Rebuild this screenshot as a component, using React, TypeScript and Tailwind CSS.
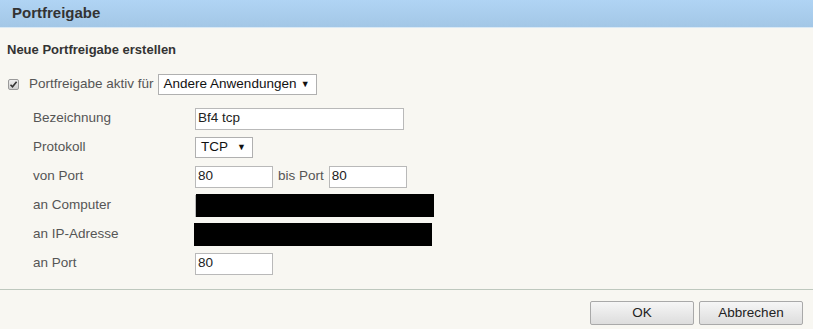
import { ReactNode } from "react";

const font = { fontFamily: '"Liberation Sans", Arial, sans-serif' };

function Field({ w, value, children }: { w: string; value?: string; children?: ReactNode }) {
  return (
    <div className={`relative h-[22px] ${w} bg-white border border-[#b9b9b9] flex items-center px-[2px] text-[13.5px] text-[#222]`}>
      {value}
      {children}
    </div>
  );
}

function Select({ w, value }: { w: string; value: string }) {
  return (
    <div className={`h-[21px] ${w} bg-white border border-[#b0b0b0] flex items-center justify-between pl-[5px] pr-[6px] text-[13.5px] text-[#111]`}>
      <span>{value}</span>
      <span className="text-[9px] leading-none">▼</span>
    </div>
  );
}

function Row({ label, children }: { label: string; children: ReactNode }) {
  return (
    <div className="h-[29px] flex items-center">
      <div className="w-[195px] shrink-0 pl-[33px] text-[13.5px] text-[#555]">{label}</div>
      <div className="flex items-center">{children}</div>
    </div>
  );
}

function Redacted({ className }: { className: string }) {
  return <div className={`absolute bg-black ${className}`} />;
}

export default function App() {
  return (
    <div style={font} className="w-[813px] h-[329px] bg-[#f8f7f2] flex flex-col overflow-hidden">
      {/* header */}
      <div className="h-[28px] shrink-0 bg-gradient-to-b from-[#b0d4f4] to-[#a3c7e6] border-b border-[#d9e9f5] flex items-center pl-[12px]">
        <span className="text-[15px] font-bold text-[#333]">Portfreigabe</span>
      </div>

      <div className="flex-1 flex flex-col">
        <div className="pt-[14px] pl-[7px] text-[13px] font-bold text-[#333] leading-[16px]">Neue Portfreigabe erstellen</div>

        <div className="mt-[16px] h-[21px] flex items-center">
          <span className="ml-[8px] w-[11px] h-[11px] rounded-[2px] border border-[#9a9a9a] bg-gradient-to-b from-[#eee] to-[#cfcfcf] flex items-center justify-center">
            <svg width="9" height="9" viewBox="0 0 9 9">
              <path d="M1.5 4.8 L3.5 6.8 L7.6 1.8" fill="none" stroke="#333" strokeWidth="1.6" />
            </svg>
          </span>
          <span className="ml-[10px] text-[13.5px] text-[#555]">Portfreigabe aktiv für</span>
          <div className="ml-[4px]">
            <Select w="w-[159px]" value="Andere Anwendungen" />
          </div>
        </div>

        <div className="mt-[9px] flex flex-col">
          <Row label="Bezeichnung">
            <Field w="w-[209px]" value="Bf4 tcp" />
          </Row>
          <Row label="Protokoll">
            <Select w="w-[58px]" value="TCP" />
          </Row>
          <Row label="von Port">
            <Field w="w-[78px]" value="80" />
            <span className="mx-[5px] text-[13.5px] text-[#555]">bis Port</span>
            <Field w="w-[78px]" value="80" />
          </Row>
          <Row label="an Computer">
            <Field w="w-[230px]">
              <Redacted className="left-[0px] top-[-2px] w-[238px] h-[23px]" />
            </Field>
          </Row>
          <Row label="an IP-Adresse">
            <Field w="w-[209px]">
              <Redacted className="left-[-2px] top-[-2px] w-[238px] h-[23px]" />
            </Field>
          </Row>
          <Row label="an Port">
            <Field w="w-[78px]" value="80" />
          </Row>
        </div>
      </div>

      {/* footer */}
      <div className="h-[40px] shrink-0 border-t border-[#bec8be] flex items-start justify-end gap-[5px] pt-[11px] pr-[10px]">
        <button className="w-[104px] h-[24px] rounded-[2px] border border-[#a9a9a9] bg-gradient-to-b from-[#f6f6f6] to-[#dddddd] text-[13.5px] text-[#222]">OK</button>
        <button className="w-[104px] h-[24px] rounded-[2px] border border-[#a9a9a9] bg-gradient-to-b from-[#f6f6f6] to-[#dddddd] text-[13.5px] text-[#222]">Abbrechen</button>
      </div>
    </div>
  );
}
